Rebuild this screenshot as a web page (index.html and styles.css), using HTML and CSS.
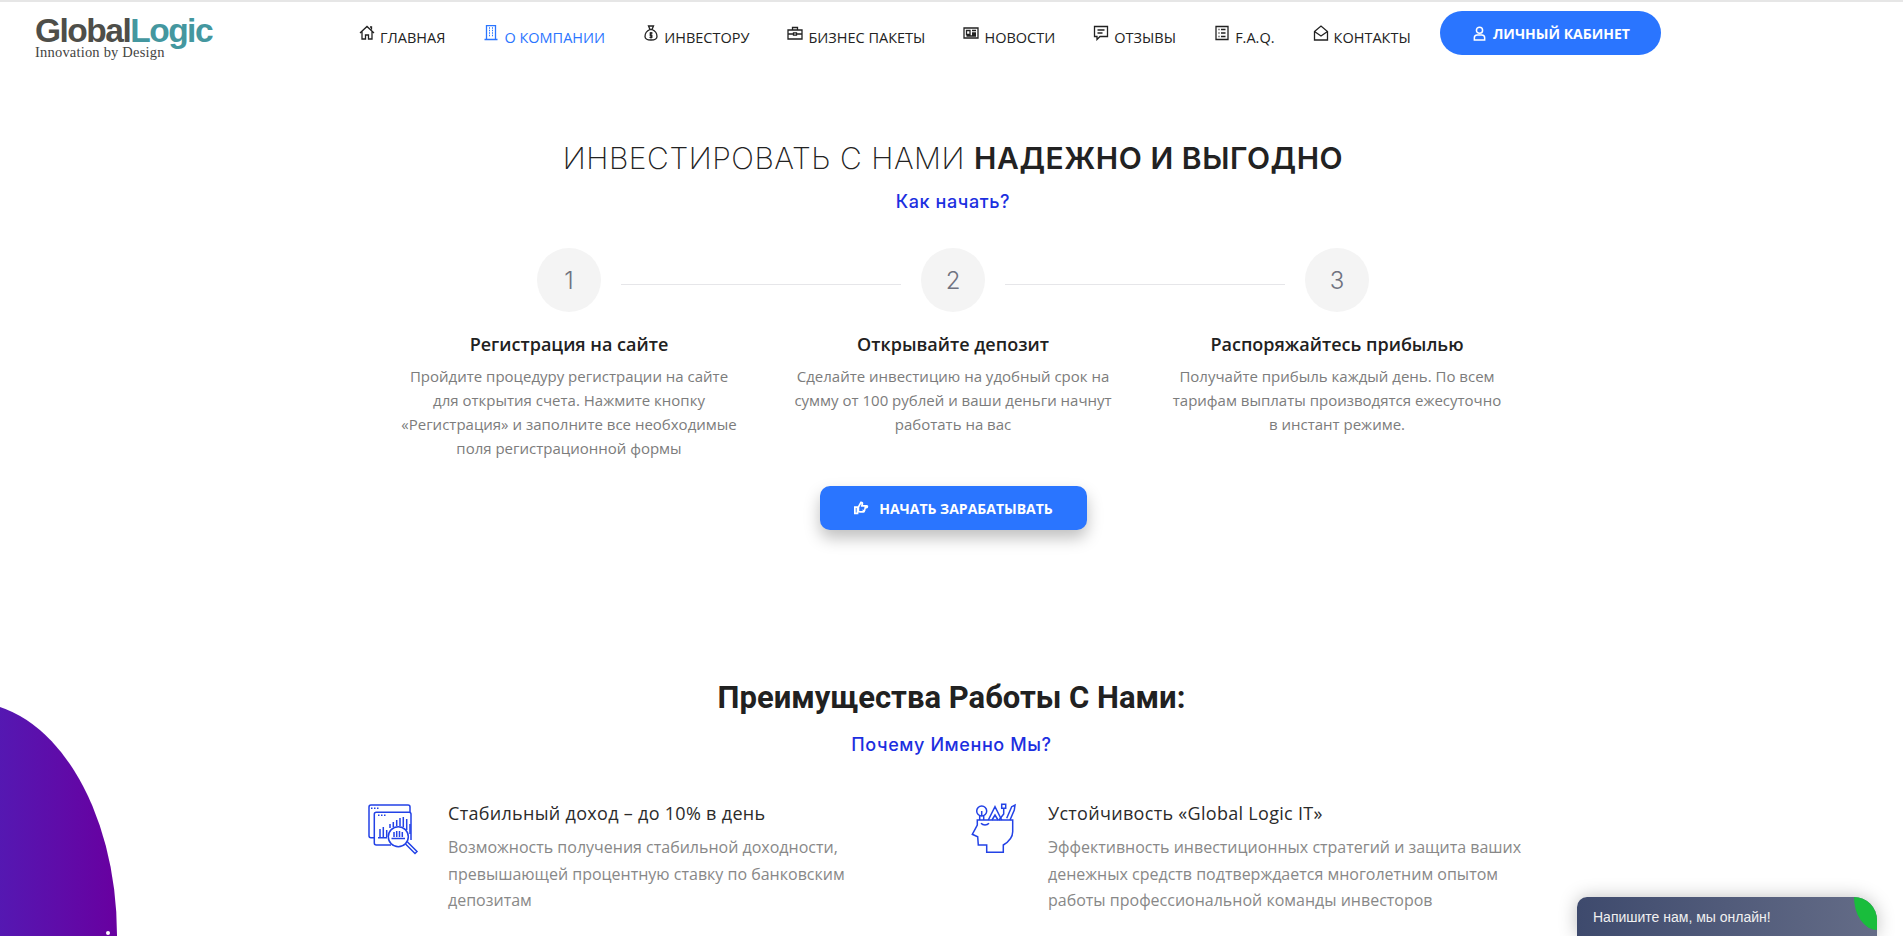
FILE: index.html
```html
<!DOCTYPE html>
<html lang="ru">
<head>
    <meta charset="UTF-8">
    <meta name="viewport" content="width=device-width, initial-scale=1.0">
    <title>Global Logic</title>
    <link rel="stylesheet" href="styles.css">
</head>
<body>
    <header class="header">
        <a class="logo" href="#">
            <span class="logo-name">Global<span class="logo-accent">Logic</span></span>
            <span class="logo-tag">Innovation by Design</span>
        </a>
        <nav class="nav">
            <a class="nav-item" href="#">
                <svg class="nav-icon" viewBox="0 0 16 16"><path d="M1 8l7-6.500L15 8M3 6.500V14h3.500v-4h3v4H13V6.500M11 2h1.500v2.500"/></svg>Главная
            </a>
            <a class="nav-item active" href="#">
                <svg class="nav-icon" viewBox="0 0 16 16"><path d="M3.500 14.500V.5h9v14M1.500 14.500h13M6 3h1M9 3h1M6 5.500h1M9 5.500h1M6 8h1M9 8h1M6 10.500h1M9 10.500h1"/></svg>О компании
            </a>
            <a class="nav-item" href="#">
                <svg class="nav-icon" viewBox="0 0 16 16"><path d="M5.500 1h5L9 4.500H7zM7 4.500C3.500 6 2 9 2 11.500 2 14 4 15 8 15s6-1 6-3.500C14 9 12.500 6 9 4.500M9.500 8H7.300v2.300h1.500v2H6.500M8 7v6.500"/></svg>Инвестору
            </a>
            <a class="nav-item" href="#">
                <svg class="nav-icon" viewBox="0 0 16 16"><path d="M1 5h14v9H1zM5.500 5V2.500h5V5M1 9h5.500M9.500 9H15M6.500 7.800h3v2.400h-3z"/></svg>Бизнес пакеты
            </a>
            <a class="nav-item" href="#">
                <svg class="nav-icon" viewBox="0 0 16 16"><path d="M1 3h14v10H1zM3.500 5.500H7v4H3.500zM9 5.500h4M9 8h4M3.500 11H13M9 9.500h4"/></svg>Новости
            </a>
            <a class="nav-item" href="#">
                <svg class="nav-icon" viewBox="0 0 16 16"><path d="M1.500 1.500h13v10H7l-3 3v-3H1.500zM4.500 5h7M4.500 8h5"/></svg>Отзывы
            </a>
            <a class="nav-item" href="#">
                <svg class="nav-icon" viewBox="0 0 16 16"><path d="M2 1.500h12v13H2zM4.500 4.500h1M7 4.500h4.500M4.500 8h1M7 8h4.500M4.500 11.500h1M7 11.500h4.500"/></svg>F.A.Q.
            </a>
            <a class="nav-item" href="#">
                <svg class="nav-icon" viewBox="0 0 16 16"><path d="M1.500 6.500L8 1l6.500 5.500V15h-13zM1.500 6.500L8 11l6.500-4.500"/></svg>Контакты
            </a>
            <a class="cabinet-btn" href="#">
                <svg class="cabinet-icon" viewBox="0 0 16 16"><circle cx="8" cy="4.500" r="3.300"/><path d="M2.500 15v-2.500c0-1.700 1.300-3 3-3h5c1.700 0 3 1.300 3 3V15z"/></svg>Личный кабинет
            </a>
        </nav>
    </header>

    <main>
        <section class="start">
            <h1 class="start-title">Инвестировать с нами <b>надежно и выгодно</b></h1>
            <p class="subtitle">Как начать?</p>
            <div class="steps">
                <div class="step line-after">
                    <div class="step-num">1</div>
                    <h3 class="step-title">Регистрация на сайте</h3>
                    <p class="step-text">Пройдите процедуру регистрации на сайте для открытия счета. Нажмите кнопку «Регистрация» и заполните все необходимые поля регистрационной формы</p>
                </div>
                <div class="step line-after">
                    <div class="step-num">2</div>
                    <h3 class="step-title">Открывайте депозит</h3>
                    <p class="step-text">Сделайте инвестицию на удобный срок на сумму от 100 рублей и ваши деньги начнут работать на вас</p>
                </div>
                <div class="step">
                    <div class="step-num">3</div>
                    <h3 class="step-title">Распоряжайтесь прибылью</h3>
                    <p class="step-text">Получайте прибыль каждый день. По всем тарифам выплаты производятся ежесуточно в инстант режиме.</p>
                </div>
            </div>
            <a class="start-btn" href="#">
                <svg class="start-btn-icon" viewBox="0 0 16 16"><path d="M1 7h3v7H1zM5 7l3-5.500c1.300 0 1.800 1 1.500 2L9 5.500h5.500c1 0 1 2-.2 2H12c1 .3.800 1.800-.2 1.800.8.400.5 1.700-.4 1.700.5.500.2 1.500-.7 1.500H7c-1 0-2-.5-2-1z"/></svg>Начать зарабатывать
            </a>
        </section>

        <section class="benefits">
            <h2 class="benefits-title">Преимущества Работы С Нами:</h2>
            <p class="subtitle">Почему Именно Мы?</p>
            <div class="benefit-grid">
                <div class="benefit">
                    <svg class="benefit-icon" viewBox="0 0 52 54">
                        <path d="M6 35.700H3a2 2 0 0 1-2-2V5a2 2 0 0 1 2-2h37a2 2 0 0 1 2 2v5.300"/>
                        <path d="M23 43H8.300a2 2 0 0 1-2-2V12.300a2 2 0 0 1 2-2H41a2 2 0 0 1 2 2V38"/>
                        <path d="M3 6.300h1.500M6 6.300h1.500M9 6.300h1.500M10 13.300h1.500M13 13.300h1.500M16 13.300h1.500"/>
                        <path d="M10 35.700h9M12 35v-8M15.300 35V25M18.700 35v-7M22 26v-4M25.300 25v-5M28.700 24v-6M32 24v-8M35.300 25V15M38.700 28V17M42 32V22"/>
                        <circle cx="30.300" cy="34.700" r="10"/>
                        <path d="M23.500 36.500h13.500M26 35v-5M28.700 35v-6M31.500 35v-6M34.300 35v-5M37.500 42l9.500 9.500 2-2-9.500-9.500"/>
                    </svg>
                    <div class="benefit-body">
                        <h4 class="benefit-title">Стабильный доход – до 10% в день</h4>
                        <p class="benefit-text">Возможность получения стабильной доходности, превышающей процентную ставку по банковским депозитам</p>
                    </div>
                </div>
                <div class="benefit">
                    <svg class="benefit-icon" viewBox="0 0 52 54">
                        <path d="M9.300 18h35.400v11.700c0 5-4 10-9.400 13.300v7.300H18.700V43h-8.400l-.6-8.300-5.400-2.400L9.300 23z"/>
                        <path d="M13 21.300c2 2.200 6 2.200 8 0"/>
                        <circle cx="13.700" cy="9" r="5"/>
                        <path d="M11.700 14v4M15.700 14v4M13.700 9v5M20.300 18L27 4.700 33.700 18M24 18l3-5 3 5"/>
                        <path d="M33.700 2.300h4v4h-4zM35.700 6.300V12L31 18M38.700 16.300l5-11.600L47 3l-.7 5L42 18"/>
                    </svg>
                    <div class="benefit-body">
                        <h4 class="benefit-title">Устойчивость «Global Logic IT»</h4>
                        <p class="benefit-text">Эффективность инвестиционных стратегий и защита ваших денежных средств подтверждается многолетним опытом работы профессиональной команды инвесторов</p>
                    </div>
                </div>
            </div>
        </section>
    </main>

    <div class="blob"><span class="blob-dot"></span></div>

    <div class="chat">
        <span class="chat-text">Напишите нам, мы онлайн!</span>
        <span class="chat-leaf"></span>
    </div>
</body>
</html>
```

FILE: styles.css
```css
* {
    box-sizing: border-box;
}
html, body {
    height: 936px;
    overflow: hidden;
}
body {
    margin: 0;
    font-family: "Open Sans", sans-serif;
    background: #fff;
    color: #212121;
    border-top: 2px solid #e6e6e6;
    position: relative;
}
a {
    text-decoration: none;
    color: inherit;
}

/* шапка */
.header {
    display: flex;
    align-items: flex-start;
    height: 70px;
    padding-left: 35px;
}
.logo {
    display: flex;
    flex-direction: column;
    width: 324px;
    padding-top: 13px;
}
.logo-name {
    font-family: "Liberation Sans", sans-serif;
    font-size: 33.5px;
    font-weight: 700;
    letter-spacing: -1.5px;
    line-height: 32px;
    color: #4e4e49;
}
.logo-accent {
    color: #44979f;
}
.logo-tag {
    font-family: "Liberation Serif", serif;
    font-size: 14.5px;
    line-height: 13px;
    letter-spacing: 0.2px;
    color: #44443f;
    margin-top: -1px;
}
.nav {
    display: flex;
    align-items: flex-start;
    padding-top: 9px;
}
.nav-item {
    display: flex;
    align-items: flex-start;
    height: 44px;
    padding-top: 17px;
    margin-right: 38.1px;
    font-size: 14.5px;
    line-height: 20px;
    text-transform: uppercase;
    color: #222;
    white-space: nowrap;
}
.nav-item.active {
    color: #2a75ff;
}
.nav-icon {
    width: 16px;
    height: 16px;
    margin: -3px 5px 0 0;
    fill: none;
    stroke: currentColor;
    stroke-width: 1.3;
}
.cabinet-btn {
    display: flex;
    align-items: center;
    justify-content: center;
    width: 221px;
    height: 44px;
    margin-left: -8.4px;
    border-radius: 22px;
    background: #2a75ff;
    color: #fff;
    font-size: 14px;
    font-weight: 700;
    text-transform: uppercase;
    white-space: nowrap;
}
.cabinet-icon {
    width: 15px;
    height: 15px;
    margin-right: 6px;
    fill: none;
    stroke: #fff;
    stroke-width: 1.6;
}

/* как начать */
.start {
    display: flex;
    flex-direction: column;
    align-items: center;
    padding-top: 66px;
    padding-left: 3px;
}
.start-title {
    margin: 0;
    font-family: "Inter", sans-serif;
    font-size: 30px;
    font-weight: 200;
    line-height: 40px;
    letter-spacing: 0.55px;
    text-transform: uppercase;
    color: #222;
}
.start-title b {
    font-weight: 600;
}
.subtitle {
    margin: 12px 0 0;
    font-family: "Inter", sans-serif;
    font-size: 18px;
    font-weight: 500;
    line-height: 24px;
    letter-spacing: 0.6px;
    color: #1c2fe0;
    text-align: center;
}
.steps {
    display: grid;
    grid-template-columns: repeat(3, 384px);
    margin-top: 34px;
}
.step {
    position: relative;
    display: flex;
    flex-direction: column;
    align-items: center;
}
.step.line-after::after {
    content: "";
    position: absolute;
    top: 36px;
    left: 244px;
    width: 280px;
    height: 1px;
    background: #e6e6e9;
}
.step-num {
    display: flex;
    align-items: center;
    justify-content: center;
    width: 64px;
    height: 64px;
    border-radius: 50%;
    background: #f4f4f4;
    font-family: "Inter", sans-serif;
    font-size: 24px;
    font-weight: 300;
    color: #6f7280;
}
.step-title {
    margin: 19px 0 0;
    font-size: 18px;
    font-weight: 600;
    line-height: 26px;
    color: #212121;
}
.step-text {
    width: 340px;
    margin: 7px 0 0;
    font-size: 15px;
    line-height: 24px;
    color: #7c7c7c;
    text-align: center;
}
.start-btn {
    display: flex;
    align-items: center;
    justify-content: center;
    width: 267px;
    height: 44px;
    margin-top: 26px;
    border-radius: 10px;
    background: #2a75ff;
    box-shadow: 0 8px 16px rgba(0, 0, 0, 0.25);
    color: #fff;
    font-size: 14px;
    font-weight: 700;
    text-transform: uppercase;
}
.start-btn-icon {
    width: 16px;
    height: 14px;
    margin-right: 10px;
    fill: none;
    stroke: #fff;
    stroke-width: 2;
}

/* преимущества */
.benefits {
    padding-top: 148px;
}
.benefits-title {
    margin: 0;
    font-family: "Roboto", sans-serif;
    font-size: 31px;
    font-weight: 700;
    line-height: 40px;
    color: #212121;
    text-align: center;
}
.benefits .subtitle {
    margin-top: 15px;
}
.benefit-grid {
    display: grid;
    grid-template-columns: 600px 600px;
    margin: 43px 0 0 368px;
}
.benefit {
    display: flex;
}
.benefit-icon {
    flex: none;
    width: 52px;
    height: 54px;
    margin: 2px 28px 0 0;
    fill: none;
    stroke: #2342e6;
    stroke-width: 1.5;
}
.benefit-title {
    margin: 0;
    font-size: 18px;
    font-weight: 500;
    line-height: 26px;
    letter-spacing: 0.3px;
    color: #2b2b2b;
}
.benefit-text {
    width: 480px;
    margin: 8px 0 0;
    font-size: 16px;
    line-height: 26.5px;
    color: #888;
}

/* декор и чат */
.blob {
    position: absolute;
    left: -30px;
    top: 700px;
    width: 147px;
    height: 234px;
    border-top-right-radius: 147px 233px;
    background: linear-gradient(to right, #4d20bb 0%, #5518b2 20%, #6800a0 100%);
}
.blob-dot {
    position: absolute;
    left: 136px;
    top: 229px;
    width: 4px;
    height: 4px;
    border-radius: 50%;
    background: #fff;
}
.chat {
    position: absolute;
    left: 1577px;
    top: 895px;
    width: 300px;
    height: 39px;
    padding: 8px 16px;
    border-radius: 10px 23px 0 0;
    background: linear-gradient(to right, #3e4a6d, #646c87);
    box-shadow: 0 0 18px rgba(0, 0, 0, 0.25);
    overflow: hidden;
}
.chat-text {
    font-family: "Liberation Sans", sans-serif;
    font-size: 14px;
    line-height: 18px;
    color: #f0f0f0;
}
.chat-leaf {
    position: absolute;
    top: 0;
    right: 0;
    width: 23px;
    height: 33px;
    background: #19bd3c;
    border-radius: 0 0 0 100%;
}
```
